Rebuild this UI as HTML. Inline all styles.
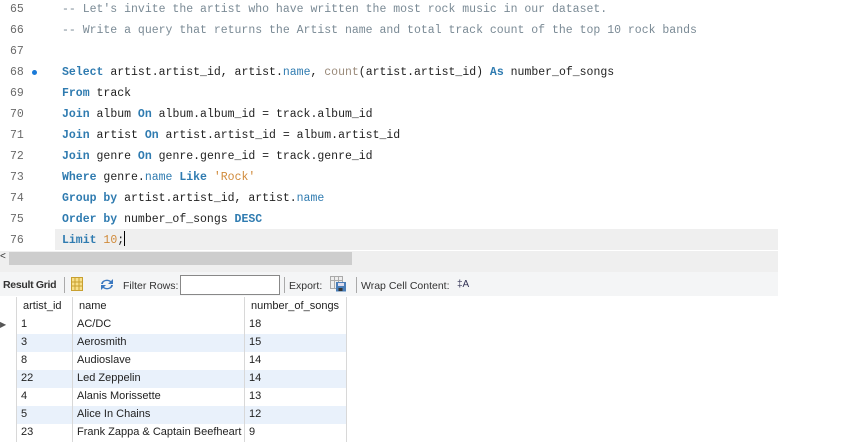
<!DOCTYPE html>
<html><head><meta charset="utf-8">
<style>
*{margin:0;padding:0;box-sizing:border-box}
html,body{width:850px;height:442px;overflow:hidden}
body{background:#fff;position:relative;font-family:"Liberation Sans",sans-serif}
.ln{position:absolute;left:0;width:850px;height:21px;font-family:"Liberation Mono",monospace;font-size:11.5px;line-height:21px;color:#222;white-space:pre}
.num{position:absolute;left:10px;color:#6a6a6a}
.code{position:absolute;left:62px}
.k{color:#2f7bb0;font-weight:bold}
.c{color:#7a8a95}
.o{color:#d08a3a}
.f{color:#9a8a7a}
.b{color:#2f7bb0}
.tb{position:absolute;font-size:11px;color:#333}
.grid{position:absolute;left:0;top:297px;font-size:11px;color:#222}
.row{position:relative;height:18px;line-height:17px;border-bottom:1px solid #eee;white-space:nowrap}
.row div{position:absolute;top:0;height:18px;border-right:1px solid #d8d8d8;padding-left:4px}
.row .a1{left:0;width:17px;padding:0;font-size:8px;color:#555}
.row .a2{left:17px;width:56px}
.row .a3{left:73px;width:172px}
.row .a4{left:245px;width:102px}
.alt .a2,.alt .a3,.alt .a4{background:#e9f1fb}
.hd{height:19px;line-height:18px;border-bottom:1px solid #ccc}
.hd div{height:19px;padding-left:6px}
</style></head><body>
<div style="position:absolute;left:55px;top:229px;width:723px;height:21px;background:#efefef"></div>
<div class="ln" style="top:-1px"><span class="num">65</span><span class="code c">-- Let's invite the artist who have written the most rock music in our dataset.</span></div>
<div class="ln" style="top:20px"><span class="num">66</span><span class="code c">-- Write a query that returns the Artist name and total track count of the top 10 rock bands</span></div>
<div class="ln" style="top:41px"><span class="num">67</span></div>
<div class="ln" style="top:62px"><span class="num">68</span><span style="position:absolute;left:32px;top:8px;width:5px;height:5px;border-radius:50%;background:#1a7ad8"></span><span class="code"><span class="k">Select</span> artist.artist_id, artist.<span class="b">name</span>, <span class="f">count</span>(artist.artist_id) <span class="k">As</span> number_of_songs</span></div>
<div class="ln" style="top:83px"><span class="num">69</span><span class="code"><span class="k">From</span> track</span></div>
<div class="ln" style="top:104px"><span class="num">70</span><span class="code"><span class="k">Join</span> album <span class="k">On</span> album.album_id = track.album_id</span></div>
<div class="ln" style="top:125px"><span class="num">71</span><span class="code"><span class="k">Join</span> artist <span class="k">On</span> artist.artist_id = album.artist_id</span></div>
<div class="ln" style="top:146px"><span class="num">72</span><span class="code"><span class="k">Join</span> genre <span class="k">On</span> genre.genre_id = track.genre_id</span></div>
<div class="ln" style="top:167px"><span class="num">73</span><span class="code"><span class="k">Where</span> genre.<span class="b">name</span> <span class="k">Like</span> <span class="o">'Rock'</span></span></div>
<div class="ln" style="top:188px"><span class="num">74</span><span class="code"><span class="k">Group by</span> artist.artist_id, artist.<span class="b">name</span></span></div>
<div class="ln" style="top:209px"><span class="num">75</span><span class="code"><span class="k">Order by</span> number_of_songs <span class="k">DESC</span></span></div>
<div class="ln" style="top:230px"><span class="num">76</span><span class="code"><span class="k">Limit</span> <span class="o">10</span>;<span style="display:inline-block;width:1px;height:15px;background:#000;vertical-align:-3px"></span></span></div>
<div style="position:absolute;left:0;top:251px;width:778px;height:21px;background:#efefef"></div>
<div style="position:absolute;left:9px;top:252px;width:343px;height:13px;background:#cdcdcd"></div>
<div style="position:absolute;left:0;top:251px;font-size:10px;color:#333">&lt;</div>
<div style="position:absolute;left:0;top:272px;width:778px;height:24px;background:#f4f5f6"></div>
<div class="tb" style="left:3px;top:279px;font-weight:bold;font-size:10.5px;letter-spacing:-0.3px">Result Grid</div>
<div style="position:absolute;left:64px;top:277px;width:1px;height:16px;background:#aaa"></div>
<svg style="position:absolute;left:71px;top:277px" width="12" height="14"><rect x=".5" y=".5" width="11" height="13" fill="#f8e08a" stroke="#c8a030"/><line x1="4" y1="1" x2="4" y2="13" stroke="#c8a030"/><line x1="8" y1="1" x2="8" y2="13" stroke="#c8a030"/><line x1="1" y1="5" x2="11" y2="5" stroke="#c8a030"/><line x1="1" y1="9" x2="11" y2="9" stroke="#c8a030"/></svg>
<svg style="position:absolute;left:99px;top:278px" width="16" height="13"><path d="M2 6 A6 5 0 0 1 12 3 L14 1 L14 6 L9 6 L11 4 A4 3 0 0 0 4 6Z" fill="#3a78c0"/><path d="M14 7 A6 5 0 0 1 4 10 L2 12 L2 7 L7 7 L5 9 A4 3 0 0 0 12 7Z" fill="#3a78c0"/></svg>
<div class="tb" style="left:123px;top:280px;font-size:10.5px">Filter Rows:</div>
<div style="position:absolute;left:180px;top:275px;width:100px;height:20px;background:#fff;border:1px solid #888"></div>
<div style="position:absolute;left:284px;top:277px;width:1px;height:16px;background:#aaa"></div>
<div class="tb" style="left:289px;top:280px;font-size:10.5px">Export:</div>
<svg style="position:absolute;left:330px;top:276px" width="17" height="16"><rect x=".5" y=".5" width="12" height="12" fill="#eee" stroke="#aaa"/><line x1="4.5" y1="1" x2="4.5" y2="12" stroke="#aaa"/><line x1="8.5" y1="1" x2="8.5" y2="12" stroke="#aaa"/><line x1="1" y1="4.5" x2="12" y2="4.5" stroke="#aaa"/><rect x="6" y="6" width="10" height="9.5" fill="#4a7eb8"/><rect x="8" y="7" width="6" height="3" fill="#dde"/><rect x="8.5" y="12" width="4" height="3" fill="#333"/></svg>
<div style="position:absolute;left:356px;top:277px;width:1px;height:16px;background:#aaa"></div>
<div class="tb" style="left:361px;top:280px;font-size:10.5px">Wrap Cell Content:</div>
<div class="tb" style="left:457px;top:279px;font-size:10px;color:#335">‡A</div>
<div class="grid">
<div class="row hd"><div class="a1"></div><div class="a2">artist_id</div><div class="a3">name</div><div class="a4">number_of_songs</div></div>
<div class="row"><div class="a1">▶</div><div class="a2">1</div><div class="a3">AC/DC</div><div class="a4">18</div></div>
<div class="row alt"><div class="a1"></div><div class="a2">3</div><div class="a3">Aerosmith</div><div class="a4">15</div></div>
<div class="row"><div class="a1"></div><div class="a2">8</div><div class="a3">Audioslave</div><div class="a4">14</div></div>
<div class="row alt"><div class="a1"></div><div class="a2">22</div><div class="a3">Led Zeppelin</div><div class="a4">14</div></div>
<div class="row"><div class="a1"></div><div class="a2">4</div><div class="a3">Alanis Morissette</div><div class="a4">13</div></div>
<div class="row alt"><div class="a1"></div><div class="a2">5</div><div class="a3">Alice In Chains</div><div class="a4">12</div></div>
<div class="row"><div class="a1"></div><div class="a2">23</div><div class="a3">Frank Zappa &amp; Captain Beefheart</div><div class="a4">9</div></div>
<div class="row alt"><div class="a1"></div><div class="a2">2</div><div class="a3">Accept</div><div class="a4">4</div></div>
</div>
</body></html>
